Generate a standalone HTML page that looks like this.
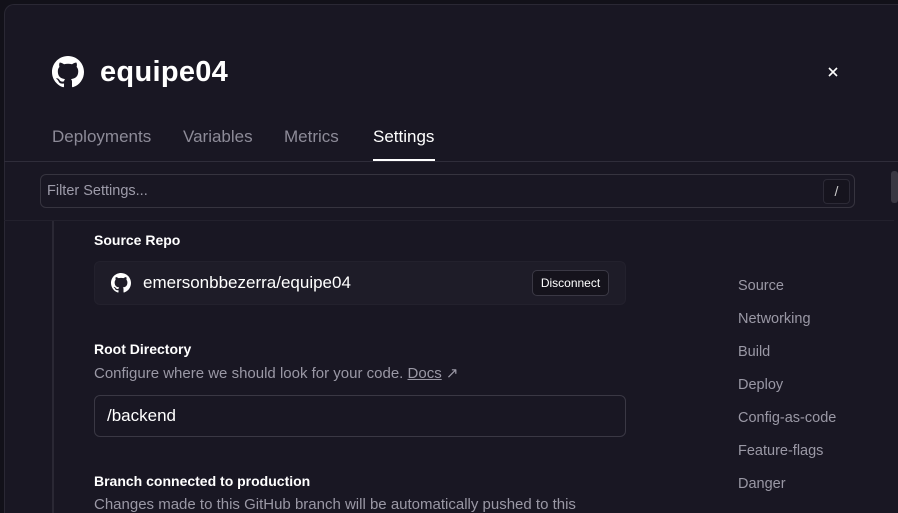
<!DOCTYPE html>
<html style="overflow:hidden;width:898px;height:513px"><head><meta charset="utf-8"><style>
*{box-sizing:border-box;margin:0;padding:0}
body{width:898px;height:513px;overflow:hidden;background:#121119;font-family:"Liberation Sans",sans-serif;position:relative}
.panel{position:absolute;left:4px;top:4px;width:894px;height:509px;background:#191723;border-left:1px solid #2a2834;border-top:1px solid #2a2834;border-radius:10px 0 0 0}
.abs{position:absolute}
.title{left:100px;top:56px;color:#fff;font-size:29px;font-weight:bold;letter-spacing:0.3px}
.tab{top:127px;font-size:17px;color:#8d8b98}
.hl{left:4px;width:894px;height:1px;background:#2f2d3a}
.filter{left:40px;top:174px;width:815px;height:34px;border:1px solid #36343f;border-radius:6px;color:#9e9caa;font-size:14.5px;padding:8px 6px}
.kbd{left:823px;top:179px;width:27px;height:25px;border:1px solid #2c2a36;border-radius:4px;background:#16141e;color:#ccc;font-size:14px;text-align:center;line-height:23px}
.h{color:#fff;font-weight:bold;font-size:14px;left:94px}
.repo{left:94px;top:261px;width:532px;height:44px;background:#1e1c28;border:1px solid #23212d;border-radius:6px}
.btn{left:532px;top:270px;width:77px;height:26px;border:1px solid #3a3844;border-radius:5px;background:#15131c;color:#fff;font-size:12px;text-align:center;line-height:24px}
.desc{left:94px;color:#9a98a5;font-size:15px}
.inp{left:94px;top:395px;width:532px;height:42px;border:1px solid #3a3844;border-radius:6px;color:#fff;font-size:17px;padding:10px 12px}
.side{left:738px;color:#9a98a5;font-size:14.5px}
</style></head><body>
<div class="panel"></div>
<svg class="abs" style="left:52px;top:56px" width="32" height="32" viewBox="0 0 16 16"><path fill="#fff" d="M8 0C3.58 0 0 3.58 0 8c0 3.54 2.29 6.53 5.47 7.59.4.07.55-.17.55-.38 0-.19-.01-.82-.01-1.49-2.01.37-2.53-.49-2.69-.94-.09-.23-.48-.94-.82-1.13-.28-.15-.68-.52-.01-.53.63-.01 1.08.58 1.23.82.72 1.21 1.87.87 2.33.66.07-.52.28-.87.51-1.07-1.78-.2-3.64-.89-3.64-3.95 0-.87.31-1.59.82-2.15-.08-.2-.36-1.02.08-2.12 0 0 .67-.21 2.2.82.64-.18 1.32-.27 2-.27.68 0 1.36.09 2 .27 1.53-1.04 2.2-.82 2.2-.82.44 1.1.16 1.92.08 2.12.51.56.82 1.27.82 2.15 0 3.07-1.87 3.75-3.65 3.95.29.25.54.73.54 1.48 0 1.07-.01 1.93-.01 2.2 0 .21.15.46.55.38A8.013 8.013 0 0016 8c0-4.42-3.58-8-8-8z"/></svg>
<div class="abs title">equipe04</div>
<svg class="abs" style="left:828px;top:67px" width="10" height="10" viewBox="0 0 10 10"><path d="M1 1L9 9M9 1L1 9" stroke="#fff" stroke-width="1.6"/></svg>
<div class="abs tab" style="left:52px">Deployments</div>
<div class="abs tab" style="left:183px">Variables</div>
<div class="abs tab" style="left:284px">Metrics</div>
<div class="abs tab" style="left:373px;color:#fff">Settings</div>
<div class="abs" style="left:373px;top:159px;width:62px;height:2px;background:#fff"></div>
<div class="abs hl" style="top:161px"></div>
<div class="abs filter">Filter Settings...</div>
<div class="abs kbd">/</div>
<div class="abs" style="left:891px;top:171px;width:7px;height:32px;background:#3a3843;border-radius:3px"></div>
<div class="abs hl" style="top:220px;background:#23212d;width:890px"></div>
<div class="abs" style="left:52px;top:221px;width:2px;height:292px;background:#2a2834"></div>
<div class="abs h" style="top:232px">Source Repo</div>
<div class="abs repo"></div>
<svg class="abs" style="left:111px;top:273px" width="20" height="20" viewBox="0 0 16 16"><path fill="#fff" d="M8 0C3.58 0 0 3.58 0 8c0 3.54 2.29 6.53 5.47 7.59.4.07.55-.17.55-.38 0-.19-.01-.82-.01-1.49-2.01.37-2.53-.49-2.69-.94-.09-.23-.48-.94-.82-1.13-.28-.15-.68-.52-.01-.53.63-.01 1.08.58 1.23.82.72 1.21 1.87.87 2.33.66.07-.52.28-.87.51-1.07-1.78-.2-3.64-.89-3.64-3.95 0-.87.31-1.59.82-2.15-.08-.2-.36-1.02.08-2.12 0 0 .67-.21 2.2.82.64-.18 1.32-.27 2-.27.68 0 1.36.09 2 .27 1.53-1.04 2.2-.82 2.2-.82.44 1.1.16 1.92.08 2.12.51.56.82 1.27.82 2.15 0 3.07-1.87 3.75-3.65 3.95.29.25.54.73.54 1.48 0 1.07-.01 1.93-.01 2.2 0 .21.15.46.55.38A8.013 8.013 0 0016 8c0-4.42-3.58-8-8-8z"/></svg>
<div class="abs" style="left:143px;top:273px;color:#fff;font-size:17px">emersonbbezerra/equipe04</div>
<div class="abs btn">Disconnect</div>
<div class="abs h" style="top:341px">Root Directory</div>
<div class="abs desc" style="top:364px">Configure where we should look for your code. <span style="text-decoration:underline">Docs</span> ↗</div>
<div class="abs inp">/backend</div>
<div class="abs h" style="top:473px">Branch connected to production</div>
<div class="abs desc" style="top:496px">Changes made to this GitHub branch will be automatically pushed to this</div>
<div class="abs side" style="top:278px">Source</div>
<div class="abs side" style="top:311px">Networking</div>
<div class="abs side" style="top:344px">Build</div>
<div class="abs side" style="top:377px">Deploy</div>
<div class="abs side" style="top:410px">Config-as-code</div>
<div class="abs side" style="top:443px">Feature-flags</div>
<div class="abs side" style="top:476px">Danger</div>
</body></html>
